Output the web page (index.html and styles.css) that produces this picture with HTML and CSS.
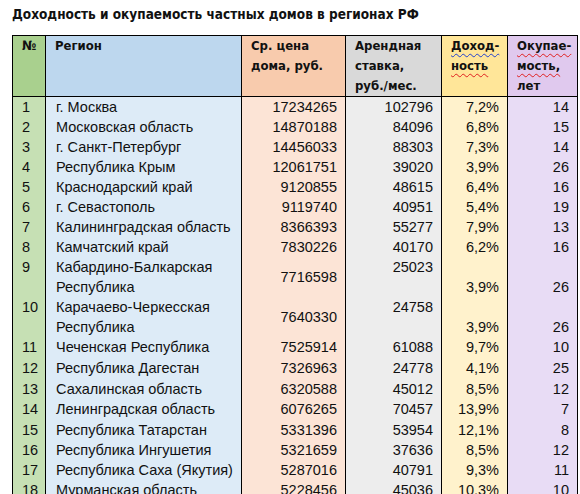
FILE: index.html
```html
<!DOCTYPE html>
<html lang="ru">
<head>
<meta charset="utf-8">
<link rel="stylesheet" href="styles.css">
</head>
<body>
<h1 class="title">Доходность и окупаемость частных домов в регионах РФ</h1>
<table class="grid">
  <colgroup>
    <col class="c-num"><col class="c-reg"><col class="c-price"><col class="c-rent"><col class="c-yield"><col class="c-pay">
  </colgroup>
  <thead>
    <tr>
      <th class="num">№</th>
      <th class="reg">Регион</th>
      <th class="price">Ср. цена<br>дома, руб.</th>
      <th class="rent">Арендная<br>ставка,<br>руб./мес.</th>
      <th class="yield"><span class="spell-blue">Доход-</span><br><span class="spell">ность</span></th>
      <th class="pay"><span class="spell">Окупае-</span><br><span class="spell">мость,</span><br>лет</th>
    </tr>
  </thead>
  <tbody>
    <tr><td class="num">1</td><td class="reg">г. Москва</td><td class="price">17234265</td><td class="rent">102796</td><td class="yield">7,2%</td><td class="pay">14</td></tr>
    <tr><td class="num">2</td><td class="reg">Московская область</td><td class="price">14870188</td><td class="rent">84096</td><td class="yield">6,8%</td><td class="pay">15</td></tr>
    <tr><td class="num">3</td><td class="reg">г. Санкт-Петербург</td><td class="price">14456033</td><td class="rent">88303</td><td class="yield">7,3%</td><td class="pay">14</td></tr>
    <tr><td class="num">4</td><td class="reg">Республика Крым</td><td class="price">12061751</td><td class="rent">39020</td><td class="yield">3,9%</td><td class="pay">26</td></tr>
    <tr><td class="num">5</td><td class="reg">Краснодарский край</td><td class="price">9120855</td><td class="rent">48615</td><td class="yield">6,4%</td><td class="pay">16</td></tr>
    <tr><td class="num">6</td><td class="reg">г. Севастополь</td><td class="price">9119740</td><td class="rent">40951</td><td class="yield">5,4%</td><td class="pay">19</td></tr>
    <tr><td class="num">7</td><td class="reg">Калининградская область</td><td class="price">8366393</td><td class="rent">55277</td><td class="yield">7,9%</td><td class="pay">13</td></tr>
    <tr><td class="num">8</td><td class="reg">Камчатский край</td><td class="price">7830226</td><td class="rent">40170</td><td class="yield">6,2%</td><td class="pay">16</td></tr>
    <tr class="double"><td class="num top">9</td><td class="reg">Кабардино-Балкарская<br>Республика</td><td class="price mid">7716598</td><td class="rent top">25023</td><td class="yield bot">3,9%</td><td class="pay bot">26</td></tr>
    <tr class="double"><td class="num top">10</td><td class="reg">Карачаево-Черкесская<br>Республика</td><td class="price mid">7640330</td><td class="rent top">24758</td><td class="yield bot">3,9%</td><td class="pay bot">26</td></tr>
    <tr><td class="num">11</td><td class="reg">Чеченская Республика</td><td class="price">7525914</td><td class="rent">61088</td><td class="yield">9,7%</td><td class="pay">10</td></tr>
    <tr class="h21"><td class="num">12</td><td class="reg">Республика Дагестан</td><td class="price">7326963</td><td class="rent">24778</td><td class="yield">4,1%</td><td class="pay">25</td></tr>
    <tr class="h21"><td class="num">13</td><td class="reg">Сахалинская область</td><td class="price">6320588</td><td class="rent">45012</td><td class="yield">8,5%</td><td class="pay">12</td></tr>
    <tr><td class="num">14</td><td class="reg">Ленинградская область</td><td class="price">6076265</td><td class="rent">70457</td><td class="yield">13,9%</td><td class="pay">7</td></tr>
    <tr class="h21"><td class="num">15</td><td class="reg">Республика Татарстан</td><td class="price">5331396</td><td class="rent">53954</td><td class="yield">12,1%</td><td class="pay">8</td></tr>
    <tr><td class="num">16</td><td class="reg">Республика Ингушетия</td><td class="price">5321659</td><td class="rent">37636</td><td class="yield">8,5%</td><td class="pay">12</td></tr>
    <tr><td class="num">17</td><td class="reg">Республика Саха (Якутия)</td><td class="price">5287016</td><td class="rent">40791</td><td class="yield">9,3%</td><td class="pay">11</td></tr>
    <tr><td class="num">18</td><td class="reg">Мурманская область</td><td class="price">5228456</td><td class="rent">45036</td><td class="yield">10,3%</td><td class="pay">10</td></tr>
  </tbody>
</table>
</body>
</html>
```
FILE: styles.css
```css
html, body {
  margin: 0;
  padding: 0;
  background: #ffffff;
  overflow: hidden;
}
body {
  width: 580px;
  height: 494px;
}
.title {
  margin: 0;
  padding: 5px 0 0 12px;
  height: 30px;
  box-sizing: border-box;
  font-family: "DejaVu Sans Condensed", "DejaVu Sans", sans-serif;
  font-weight: bold;
  font-size: 13.5px;
  line-height: 18px;
  color: #111;
}
.grid {
  margin: 5px 0 0 12px;
  width: 565px;
  border-collapse: collapse;
  table-layout: fixed;
  border-top: 1.5px solid #000;
  border-left: 1.5px solid #000;
  border-right: 1.5px solid #000;
  font-family: "Liberation Sans", Arial, sans-serif;
  font-size: 14.5px;
  color: #111;
}
.c-num { width: 33px; }
.c-reg { width: 196px; }
.c-price { width: 104px; }
.c-rent { width: 96px; }
.c-yield { width: 66px; }
.c-pay { width: 70px; }

th, td {
  border-left: 1.5px solid #000;
  padding: 0 8px 0 9px;
  line-height: 20px;
  white-space: nowrap;
  overflow: hidden;
}
th {
  height: 60px;
  vertical-align: top;
  text-align: left;
  padding-top: 0;
  font-family: "DejaVu Sans Condensed", "DejaVu Sans", sans-serif;
  font-weight: bold;
  font-size: 13px;
  line-height: 20px;
  border-bottom: 1.5px solid #000;
}
td {
  height: 20px;
  vertical-align: bottom;
  text-align: right;
}
tr.h21 td { height: 21px; }
tr.double td { height: 40px; }
td.num { text-align: left; }
td.reg { text-align: left; padding-left: 10px; }
td.top { vertical-align: top; }
td.mid { vertical-align: middle; }
td.bot { vertical-align: bottom; }

th.num { background: #a9d08e; }
th.reg { background: #bdd7ee; }
th.price { background: #f8cbad; }
th.rent { background: #d9d9d9; }
th.yield { background: #ffe699; }
th.pay { background: #e0c9ee; }
td.num { background: #c6e0b4; }
td.reg { background: #ddebf7; }
td.price { background: #fce4d6; }
td.rent { background: #ededed; }
td.yield { background: #fff2cc; }
td.pay { background: #e8dcf5; }

.spell {
  text-decoration: underline wavy #e02020;
  text-decoration-thickness: 1px;
  text-underline-offset: 3px;
}
.spell-blue {
  text-decoration: underline wavy #2040d0;
  text-decoration-thickness: 1px;
  text-underline-offset: 3px;
}
```
